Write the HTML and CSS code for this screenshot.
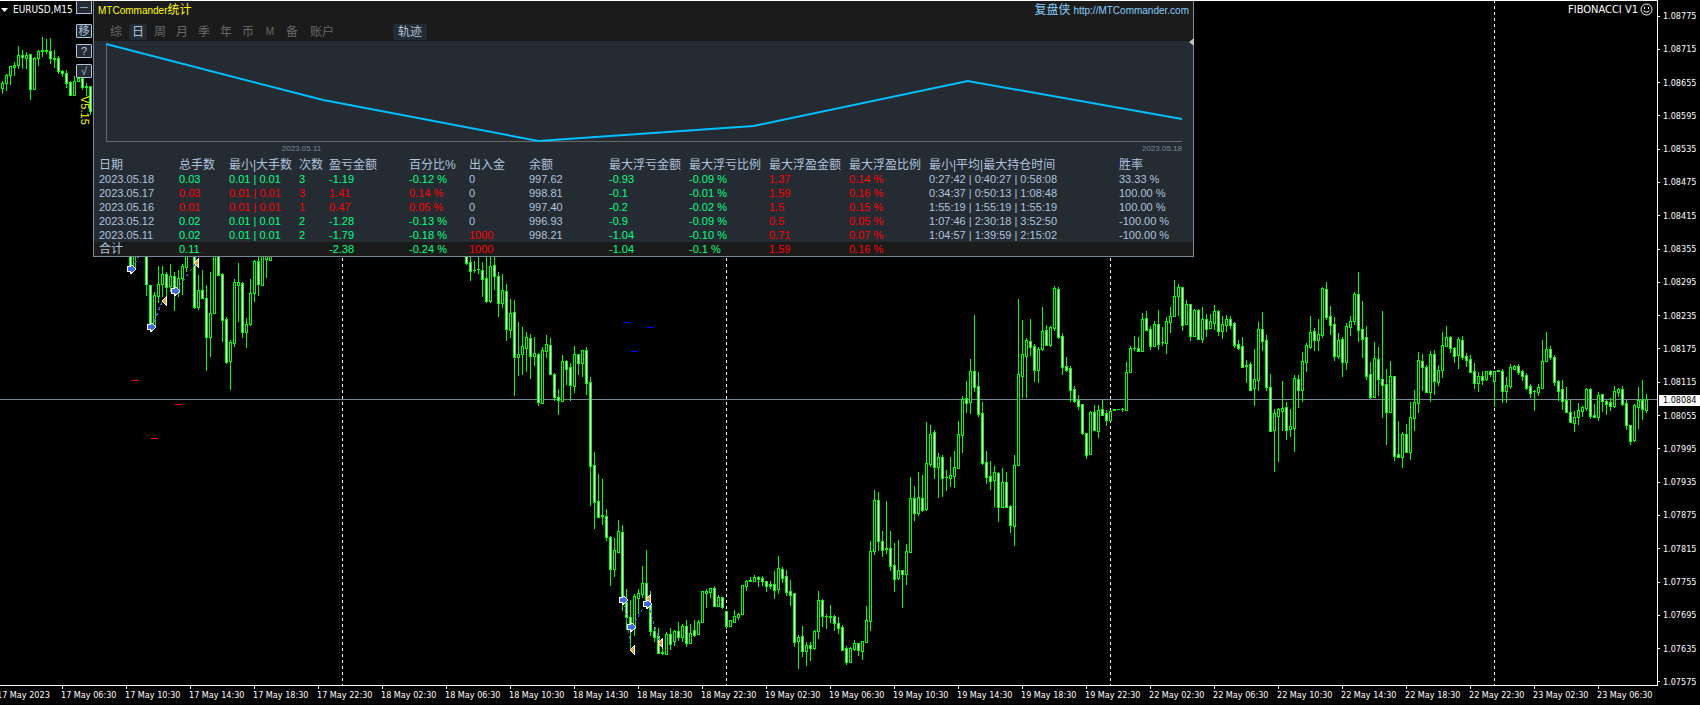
FILE: index.html
```
<!DOCTYPE html>
<html lang="zh-CN">
<head>
    <meta charset="UTF-8">
    <meta name="viewport" content="width=device-width, initial-scale=1.0">
    <title>EURUSD,M15</title>
    <link rel="stylesheet" href="styles.css">
</head>
<body>
    <div class="terminal">
        <main class="chart">
            <svg class="candles" viewBox="0 1 1657 684" preserveAspectRatio="none" shape-rendering="crispEdges">
                <path class="separator" d="M342.5 0V685M726.5 0V685M1110.5 0V685M1494.5 0V685"/>
                <path class="bid-line" d="M0 399.5H1657"/>
                <path id="outline" class="outline"/>
                <path id="hollow" class="hollow"/>
                <path id="solid" class="solid"/>
                <path class="level-red" d="M131 380h7v1h-7zM175 404h7v1h-7zM151 438h7v1h-7z"/>
                <path class="level-blue" d="M623 322h7v1h-7zM647 327h7v1h-7zM631 351h7v1h-7z"/>
                <path class="trade" d="M132 269L142 250M152 327L162 302M176 291L195 264M624 600L631 650M632 627L648 600M648 604L660 643"/>
                <defs>
                    <g id="entry">
                        <path d="M-4 -3H-1V-4H1L5 0L1 5H-1V3H-4Z" fill="#fff"/>
                        <path d="M-3 -2H0V-3H1L4 0L1 3H0V2H-3Z" fill="#4169e1"/>
                    </g>
                    <g id="exit">
                        <path d="M-3 0L1 -5H2V5H1Z" fill="#fff"/>
                        <path d="M-3 0L1 -4V4Z" fill="#daa520"/>
                    </g>
                </defs>
                <use href="#exit" x="197" y="263"/>
                <use href="#exit" x="165" y="301"/>
                <use href="#exit" x="633" y="650"/>
                <use href="#exit" x="649" y="599"/>
                <use href="#exit" x="661" y="643"/>
                <use href="#entry" x="131" y="269"/>
                <use href="#entry" x="151" y="327"/>
                <use href="#entry" x="175" y="291"/>
                <use href="#entry" x="623" y="600"/>
                <use href="#entry" x="631" y="627"/>
                <use href="#entry" x="647" y="604"/>
            </svg>

            <div class="symbol">
                <svg width="7" height="4" viewBox="0 0 7 4"><path d="M0 0H7L3.5 4Z" fill="#fff"/></svg>
                <span>EURUSD,M15</span>
            </div>
            <div class="expert">
                <span>FIBONACCI V1</span>
                <svg width="13" height="13" viewBox="0 0 13 13" fill="none" stroke="#fff">
                    <circle cx="6.5" cy="6.5" r="5.5"/>
                    <path d="M4.5 4V6M8.5 4V6M3.5 7.5Q6.5 11 9.5 7.5"/>
                </svg>
            </div>

            <div class="tools">
                <button type="button">─</button>
                <button type="button">移</button>
                <button type="button">?</button>
                <button type="button">√</button>
                <span class="version">V5.15</span>
            </div>

            <section class="panel">
                <header class="panel-header">
                    <div class="title-row">
                        <h1>MTCommander<span class="cjk">统计</span></h1>
                        <a href="http://MTCommander.com"><span class="cjk">复盘侠</span> http://MTCommander.com</a>
                    </div>
                    <nav class="tabs">
                        <button type="button">综</button>
                        <button type="button" class="active">日</button>
                        <button type="button">周</button>
                        <button type="button">月</button>
                        <button type="button">季</button>
                        <button type="button">年</button>
                        <button type="button">币</button>
                        <button type="button" class="magic">M</button>
                        <button type="button">备</button>
                        <button type="button" class="wide">账户</button>
                        <button type="button" class="wide active track">轨迹</button>
                    </nav>
                </header>

                <svg class="collapse" width="5" height="8" viewBox="0 0 5 8"><path d="M0 4L5 0V8Z" fill="#c0c0c0"/></svg>

                <div class="equity">
                    <svg viewBox="0 0 1075 101" preserveAspectRatio="none">
                        <path d="M0.5 3V100.5H1075" fill="none" stroke="#696969"/>
                        <polyline points="0,3 217,59 432,100 647,85 861,40 1075,78" fill="none" stroke="#00bfff" stroke-width="2"/>
                    </svg>
                    <div class="equity-dates">
                        <span>2023.05.11</span>
                        <span>2023.05.18</span>
                    </div>
                </div>

                <table>
                    <colgroup>
                        <col class="w85"><col class="w50"><col class="w70"><col class="w30"><col class="w80"><col class="w60"><col class="w60">
                        <col class="w80"><col class="w80"><col class="w80"><col class="w80"><col class="w80"><col class="w190"><col>
                    </colgroup>
                    <thead>
                        <tr>
                            <th>日期</th><th>总手数</th><th>最小|大手数</th><th>次数</th><th>盈亏金额</th><th>百分比%</th><th>出入金</th>
                            <th>余额</th><th>最大浮亏金额</th><th>最大浮亏比例</th><th>最大浮盈金额</th><th>最大浮盈比例</th><th>最小|平均|最大持仓时间</th><th>胜率</th>
                        </tr>
                    </thead>
                    <tbody>
                        <tr class="loss">
                            <td>2023.05.18</td><td>0.03</td><td>0.01 | 0.01</td><td>3</td><td>-1.19</td><td>-0.12 %</td><td class="plain">0</td>
                            <td class="plain">997.62</td><td>-0.93</td><td>-0.09 %</td><td class="up">1.37</td><td class="up">0.14 %</td><td class="plain">0:27:42 | 0:40:27 | 0:58:08</td><td class="plain">33.33 %</td>
                        </tr>
                        <tr class="gain">
                            <td>2023.05.17</td><td>0.03</td><td>0.01 | 0.01</td><td>3</td><td>1.41</td><td>0.14 %</td><td class="plain">0</td>
                            <td class="plain">998.81</td><td class="down">-0.1</td><td class="down">-0.01 %</td><td>1.59</td><td>0.16 %</td><td class="plain">0:34:37 | 0:50:13 | 1:08:48</td><td class="plain">100.00 %</td>
                        </tr>
                        <tr class="gain">
                            <td>2023.05.16</td><td>0.01</td><td>0.01 | 0.01</td><td>1</td><td>0.47</td><td>0.05 %</td><td class="plain">0</td>
                            <td class="plain">997.40</td><td class="down">-0.2</td><td class="down">-0.02 %</td><td>1.5</td><td>0.15 %</td><td class="plain">1:55:19 | 1:55:19 | 1:55:19</td><td class="plain">100.00 %</td>
                        </tr>
                        <tr class="loss">
                            <td>2023.05.12</td><td>0.02</td><td>0.01 | 0.01</td><td>2</td><td>-1.28</td><td>-0.13 %</td><td class="plain">0</td>
                            <td class="plain">996.93</td><td>-0.9</td><td>-0.09 %</td><td class="up">0.5</td><td class="up">0.05 %</td><td class="plain">1:07:46 | 2:30:18 | 3:52:50</td><td class="plain">-100.00 %</td>
                        </tr>
                        <tr class="loss">
                            <td>2023.05.11</td><td>0.02</td><td>0.01 | 0.01</td><td>2</td><td>-1.79</td><td>-0.18 %</td><td class="up">1000</td>
                            <td class="plain">998.21</td><td>-1.04</td><td>-0.10 %</td><td class="up">0.71</td><td class="up">0.07 %</td><td class="plain">1:04:57 | 1:39:59 | 2:15:02</td><td class="plain">-100.00 %</td>
                        </tr>
                    </tbody>
                    <tfoot>
                        <tr class="loss">
                            <td><span class="cjk">合计</span></td><td>0.11</td><td></td><td></td><td>-2.38</td><td>-0.24 %</td><td class="up">1000</td>
                            <td></td><td>-1.04</td><td>-0.1 %</td><td class="up">1.59</td><td class="up">0.16 %</td><td></td><td></td>
                        </tr>
                    </tfoot>
                </table>
            </section>
        </main>

        <aside class="price-axis">
            <span>1.08775</span><span>1.08715</span><span>1.08655</span><span>1.08595</span><span>1.08535</span><span>1.08475</span><span>1.08415</span>
            <span>1.08355</span><span>1.08295</span><span>1.08235</span><span>1.08175</span><span>1.08115</span><span>1.08055</span><span>1.07995</span>
            <span>1.07935</span><span>1.07875</span><span>1.07815</span><span>1.07755</span><span>1.07695</span><span>1.07635</span><span>1.07575</span>
            <div class="bid">1.08084</div>
        </aside>

        <div class="axis-line"></div>
        <footer class="time-axis">
            <span>17 May 2023</span><span>17 May 06:30</span><span>17 May 10:30</span><span>17 May 14:30</span><span>17 May 18:30</span><span>17 May 22:30</span>
            <span>18 May 02:30</span><span>18 May 06:30</span><span>18 May 10:30</span><span>18 May 14:30</span><span>18 May 18:30</span><span>18 May 22:30</span>
            <span>19 May 02:30</span><span>19 May 06:30</span><span>19 May 10:30</span><span>19 May 14:30</span><span>19 May 18:30</span><span>19 May 22:30</span>
            <span>22 May 02:30</span><span>22 May 06:30</span><span>22 May 10:30</span><span>22 May 14:30</span><span>22 May 18:30</span><span>22 May 22:30</span>
            <span>23 May 02:30</span><span>23 May 06:30</span>
        </footer>
    </div>

    <script src="chart.js"></script>
</body>
</html>
```

FILE: styles.css
```
* {
    margin: 0;
    padding: 0;
    box-sizing: border-box;
}

:root {
    --panel: #252b33;
    --panel-dark: #1b1b1b;
    --steel: #b0c4de;
    --slate: #778899;
    --gray: #696969;
    --green: #00ff7f;
    --red: #ff0000;
    --ui-font: "Liberation Sans", "Noto Sans CJK SC", sans-serif;
    --axis-font: "DejaVu Sans Condensed", "DejaVu Sans", sans-serif;
}

body {
    background-color: #000;
    color: #fff;
    font-family: var(--axis-font);
    font-size: 9px;
    overflow: hidden;
}

button {
    font-family: var(--ui-font);
    cursor: pointer;
}

.terminal {
    display: grid;
    grid-template-columns: 1fr 42px;
    grid-template-rows: 1fr 1px 19px;
    height: 100vh;
    min-height: 400px;
    overflow: hidden;
}

/* Chart */
.chart {
    position: relative;
    min-height: 0;
    border-top: 1px solid #fff;
    border-right: 1px solid #fff;
}

.candles {
    display: block;
    width: 100%;
    height: 100%;
}

.separator {
    stroke: #fff;
    stroke-dasharray: 3 3;
}

.bid-line {
    stroke: var(--slate);
}

.outline {
    fill: #00ff00;
}

.hollow {
    fill: #000;
}

.solid {
    fill: #fff;
}

.level-red {
    fill: #ff0000;
}

.level-blue {
    fill: #0000ff;
}

.trade {
    fill: none;
    stroke: #4169e1;
    stroke-dasharray: 3 3;
}

.symbol,
.expert {
    position: absolute;
    top: 2px;
    display: flex;
    align-items: center;
    line-height: 13px;
}

.symbol {
    left: 1px;
    gap: 5px;
    font-size: 10px;
}

.expert {
    right: 4px;
    gap: 2px;
    font-size: 11px;
}

/* Buttons beside the panel */
.tools {
    position: absolute;
    top: 0;
    left: 76px;
    display: flex;
    flex-direction: column;
    gap: 6px;
    width: 16px;
}

.tools button {
    height: 14px;
    border: 1px solid var(--steel);
    border-radius: 1px;
    background-color: var(--panel);
    color: var(--steel);
    font-size: 11px;
    line-height: 12px;
    overflow: hidden;
}

.tools button:first-child {
    height: 13px;
    border-top: none;
    margin-bottom: 4px;
    line-height: 10px;
}

.version {
    margin: 12px 0 0 2px;
    color: #ffff00;
    font-family: var(--ui-font);
    font-size: 11px;
    line-height: 14px;
    writing-mode: vertical-rl;
}

/* Statistics panel */
.panel {
    position: absolute;
    top: 0;
    left: 93px;
    right: 463px;
    border: 1px solid var(--slate);
    border-top: none;
    background-color: var(--panel);
    font-family: var(--ui-font);
    font-size: 11px;
}

.cjk {
    font-size: 12px;
}

.panel-header {
    height: 40px;
    background-color: var(--panel-dark);
}

.title-row {
    display: flex;
    justify-content: space-between;
    height: 23px;
    padding: 0 4px;
    line-height: 18px;
}

.title-row h1 {
    color: #ffff00;
    font-size: 10px;
    font-weight: normal;
}

.title-row a {
    color: #87cefa;
    font-size: 10px;
    text-decoration: none;
}

.tabs {
    display: flex;
    gap: 4px;
    padding-left: 13px;
}

.tabs button {
    width: 18px;
    height: 16px;
    border: none;
    border-radius: 2px;
    background: none;
    color: var(--gray);
    font-size: 12px;
    line-height: 16px;
}

.tabs .wide {
    width: 34px;
}

.tabs .magic {
    font-size: 10px;
}

.tabs .active {
    background-color: var(--panel);
    color: var(--steel);
}

.tabs .track {
    margin-left: 50px;
}

.collapse {
    position: absolute;
    top: 37px;
    right: -1px;
}

.equity {
    padding: 0 11px 0 12px;
}

.equity > svg {
    display: block;
    width: 100%;
    height: 101px;
}

.equity-dates {
    display: flex;
    justify-content: space-between;
    height: 16px;
    color: var(--slate);
    font-size: 8px;
    line-height: 14px;
}

.equity-dates span:first-child {
    width: 20%;
    text-align: right;
}

table {
    width: 100%;
    table-layout: fixed;
    border-collapse: collapse;
    color: var(--steel);
    white-space: nowrap;
}

th,
td {
    height: 14px;
    line-height: 14px;
    text-align: left;
    overflow: visible;
}

th {
    font-size: 12px;
    font-weight: normal;
}

th:first-child,
td:first-child {
    padding-left: 5px;
}

.loss td,
.gain .down {
    color: var(--green);
}

.gain td,
.loss .up {
    color: var(--red);
}

.loss .plain,
.gain .plain,
.loss td:first-child,
.gain td:first-child {
    color: var(--steel);
}

.gain .down {
    color: var(--green);
}

tfoot {
    background-color: var(--panel-dark);
}

.w30 { width: 30px; }
.w50 { width: 50px; }
.w60 { width: 60px; }
.w70 { width: 70px; }
.w80 { width: 80px; }
.w85 { width: 85px; }
.w190 { width: 190px; }

/* Axes */
.price-axis {
    position: relative;
    grid-column: 2;
    grid-row: 1 / 4;
    display: flex;
    flex-direction: column;
    justify-content: space-between;
    padding: 10px 0 17px;
}

.price-axis span {
    display: flex;
    align-items: center;
    gap: 3px;
    line-height: 12px;
}

.price-axis span::before {
    content: '';
    width: 2px;
    height: 1px;
    background-color: #fff;
}

.bid {
    position: absolute;
    top: 56%;
    left: 1px;
    right: 0;
    padding-left: 4px;
    background-color: #fff;
    color: #000;
    line-height: 11px;
}

.axis-line {
    grid-column: 1;
    grid-row: 2;
    background-color: #fff;
}

.time-axis {
    grid-column: 1 / 3;
    grid-row: 3;
    display: grid;
    grid-template-columns: repeat(26, 1fr);
    margin-left: -3px;
    padding-right: 39px;
    line-height: 12px;
    white-space: nowrap;
}

.time-axis span::before {
    content: '';
    display: block;
    width: 1px;
    height: 3px;
    margin-left: 1px;
    background-color: #fff;
}
```

FILE: chart.js
```
// Each bar is high, open, close, low as a y position on the chart
const STEP = 4;

const segments = [
    { x: 2, bars: `
81,88,83,94 74,83,75,91 66,75,66,85 62,67,65,76 46,65,55,69 50,55,57,69 52,58,55,69 54,54,89,100
57,89,58,89 50,58,51,66 37,51,50,57 39,50,51,54 38,51,58,64 50,58,59,68 56,58,71,74 70,71,73,77
70,73,83,88 81,82,95,96 76,95,81,96 75,81,78,81 78,78,87,90 83,86,87,96 86,86,111,115` },
    { x: 130, bars: `240,240,267,268 240,267,240,267` },
    { x: 146, bars: `
240,240,284,296 285,285,326,329 292,326,295,326 266,296,284,303 266,284,274,297 272,274,287,297
264,286,276,292 272,276,292,311 270,292,278,297 264,278,266,295 240,267,240,272` },
    { x: 194, bars: `
240,240,307,309 275,307,290,310 270,290,298,298 285,298,337,371 272,337,313,357 240,313,240,314
240,240,275,276 273,274,320,342 317,319,362,364 340,361,342,390 279,343,282,347 263,285,282,322
282,283,332,338 318,332,324,348 279,324,293,326 260,293,261,302 240,261,284,296 240,285,240,286
240,259,240,278 240,260,240,261` },
    { x: 466, bars: `
240,240,263,265 255,262,271,281 261,270,270,273 250,269,269,274 262,270,279,297 250,278,301,303
250,301,266,303 250,265,276,290 272,276,303,317 274,303,290,308 284,291,329,341 299,330,313,338
300,312,357,396 322,357,354,376 327,354,346,375 332,348,337,372 334,338,356,379 337,356,353,366
353,354,402,406 347,403,350,403 335,351,344,358 338,345,374,375 373,374,397,401 389,397,400,415
355,401,361,401 360,361,369,385 363,367,385,401 346,386,354,393 354,354,363,375 350,363,350,377
347,350,383,395 377,382,466,506 452,465,502,529 474,501,517,517 479,515,516,525 509,516,537,541
536,537,569,586 538,569,550,577 520,552,531,552 525,532,600,611 589,602,617,630 600,617,627,650
594,628,596,636 589,598,593,614 566,594,583,598 550,583,602,606 591,603,631,636 627,631,637,642
628,636,653,654 648,652,653,655 632,654,634,655 628,634,644,650 630,641,631,646 622,631,637,641
624,637,626,642 620,626,643,647 624,643,633,644 620,630,635,637 620,634,622,635 591,622,591,622
589,593,591,608 588,592,588,598 586,588,606,607 595,606,597,606 597,597,607,609 611,611,626,629
620,626,620,626 610,622,616,622 613,617,614,620 585,614,585,614 580,586,581,591 577,581,580,581
575,581,577,581 576,577,579,587 576,578,581,586 581,581,586,592 581,584,586,589 571,584,590,599
556,589,568,594 567,569,578,583 570,576,592,596 580,591,595,606 593,593,642,647 635,641,637,669
626,636,651,657 642,651,645,666 642,645,648,661 630,648,631,650 591,631,600,639 599,600,616,627
614,616,616,629 605,616,617,623 615,616,623,631 617,623,628,634 625,627,650,651 646,648,662,665
647,662,648,662 640,649,643,651 643,643,650,656 641,651,641,660 606,642,620,642 541,621,551,631
490,551,500,555 492,500,541,551 531,541,550,557 501,548,549,554 531,548,566,571 543,565,579,592
540,578,570,580 570,570,574,608 544,574,551,585 477,552,498,553 486,498,513,521 472,513,497,516
475,498,510,512 422,509,463,511 425,464,434,467 430,432,467,479 453,467,457,498 455,457,478,497
470,477,477,491 457,478,475,487 451,476,467,488 421,468,434,469 396,435,399,453 381,398,403,413
359,402,371,414 315,371,387,392 372,386,414,417 402,413,463,465 451,462,477,484 461,476,481,490
466,480,472,507 472,473,507,522 468,507,482,508 472,482,507,508 505,506,525,533 455,526,465,546
299,465,374,466 320,376,354,398 338,356,340,398 319,341,347,356 344,346,370,382 347,370,349,383
307,349,331,351 325,330,345,346 326,345,327,347 286,328,288,331 287,289,337,339 333,336,367,375
357,366,370,372 366,368,390,402 386,389,401,403 395,400,406,410 404,404,433,435 433,433,455,459
411,454,412,455 405,412,430,430 405,431,410,438 400,409,415,415 410,413,420,426 410,420,411,420
409,409,410,410 409,409,409,409 408,409,409,412 362,410,372,410 346,372,348,372 336,348,348,351
337,348,351,351 313,351,319,352 311,318,330,331 326,329,346,350 321,346,324,346 310,324,344,350
327,342,342,346 317,343,321,354 307,322,316,333 280,316,296,317 284,296,287,316 287,287,325,331
300,324,304,325 304,304,336,341 309,336,310,336 309,310,339,340 307,339,319,343 314,319,329,337
314,328,321,328 305,323,311,330 310,311,331,336 316,331,324,339 315,325,319,332 316,319,325,329
322,323,345,348 340,344,348,350 337,346,367,367 360,365,366,383 362,364,390,391 349,388,379,406
322,380,329,391 312,329,341,351 335,340,387,391 374,387,431,431 409,430,413,472 408,416,409,462
381,411,408,431 402,407,430,440 409,429,426,437 375,428,378,452 375,379,390,408 352,390,361,402
343,362,345,372 316,347,332,349 328,331,340,351 319,340,334,351 287,335,288,338 282,289,317,320
306,316,325,335 317,324,356,361 333,356,340,359 337,339,362,377 323,362,326,370 316,327,321,336
292,321,294,325 272,294,330,342 301,329,339,358 326,337,376,380 362,374,397,399 342,397,358,397
347,359,379,396 311,379,385,418 369,384,412,445 361,412,376,412 376,376,456,461 421,454,457,458
432,457,434,468 424,434,452,453 402,452,417,460 390,418,402,431 352,403,360,413 354,361,367,391
365,367,392,392 351,392,354,402 350,354,381,395 365,382,370,386 332,370,345,378 326,346,337,346
336,337,348,353 347,348,356,363 337,355,339,369 336,340,357,360 353,356,360,367 355,359,372,372
363,371,383,389 372,383,376,392 371,376,380,385 371,379,371,381 370,371,374,377 371,381,371,407
370,370,371,371 369,371,391,403 377,391,385,403 364,386,367,389 365,369,366,370 364,366,372,375
370,371,376,381 373,375,388,390 384,386,393,398 390,391,391,411 384,392,387,396 340,388,361,388
332,361,349,361 346,349,357,360 355,357,382,386 380,381,391,401 380,389,401,410 387,400,412,412
400,412,422,423 411,423,417,432 403,417,410,425 406,411,407,417 388,408,389,411 388,389,416,419
404,415,417,418 392,417,395,421 394,394,401,412 400,401,404,415 398,402,406,411 386,406,391,408
388,392,389,397 386,389,404,406 400,403,425,430 425,425,441,445 404,440,405,442 387,407,400,429
380,400,409,420 394,410,399,413` }
];

const rect = (x, y, w, h) => `M${x} ${y}h${w}v${h}h${-w}z`;

let outline = '';
let hollow = '';
let solid = '';

segments.forEach(segment => {
    segment.bars.trim().split(/\s+/).forEach((bar, i) => {
        const [high, open, close, low] = bar.split(',').map(Number);
        const x = segment.x + i * STEP;
        const top = Math.min(open, close);
        const height = Math.abs(close - open) + 1;

        // wick above the body, wick below it, then the body itself
        outline += rect(x, high, 1, Math.max(top - high, 0));
        outline += rect(x, top + height, 1, Math.max(low - top - height, 0));
        outline += rect(x - 1, top, 3, height);

        if (height > 2) {
            const inner = rect(x, top + 1, 1, height - 2);
            if (close > open) {
                solid += inner;
            } else {
                hollow += inner;
            }
        }
    });
});

document.getElementById('outline').setAttribute('d', outline);
document.getElementById('hollow').setAttribute('d', hollow);
document.getElementById('solid').setAttribute('d', solid);
```
